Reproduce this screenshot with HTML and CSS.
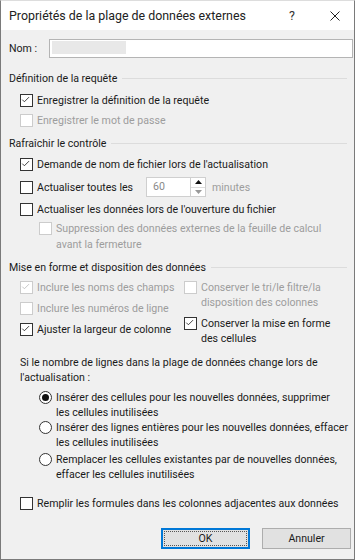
FILE: index.html
```html
<!DOCTYPE html>
<html lang="fr">
<head>
    <meta charset="UTF-8">
    <meta name="viewport" content="width=device-width, initial-scale=1.0">
    <title>Propriétés de la plage de données externes</title>
    <link rel="stylesheet" href="styles.css">
</head>
<body>
    <div class="dialog">
        <div class="titlebar">
            <span class="title">Propriétés de la plage de données externes</span>
            <span class="help">?</span>
            <svg class="close" width="10" height="10" viewBox="0 0 10 10">
                <path d="M0.5 0.5 L9.5 9.5 M9.5 0.5 L0.5 9.5" stroke="#222" stroke-width="1" fill="none"/>
            </svg>
        </div>

        <div class="content">
            <div class="name-row">
                <span class="name-label">Nom :</span>
                <div class="name-input"><span class="redacted"></span></div>
            </div>

            <!-- Définition de la requête -->
            <div class="group-title g1"><span>Définition de la requête</span><i></i></div>
            <div class="check r-q1">
                <span class="box"><svg viewBox="0 0 13 13"><path d="M2.5 6.5 L5 9 L10.5 3.5" /></svg></span>
                <span>Enregistrer la définition de la requête</span>
            </div>
            <div class="check disabled r-q2">
                <span class="box"></span>
                <span>Enregistrer le mot de passe</span>
            </div>

            <!-- Rafraîchir le contrôle -->
            <div class="group-title g2"><span>Rafraîchir le contrôle</span><i></i></div>
            <div class="check r-c1">
                <span class="box"><svg viewBox="0 0 13 13"><path d="M2.5 6.5 L5 9 L10.5 3.5" /></svg></span>
                <span>Demande de nom de fichier lors de l'actualisation</span>
            </div>
            <div class="check r-c2">
                <span class="box"></span>
                <span class="every">Actualiser toutes les</span>
                <div class="spinner">
                    <span class="spin-value">60</span>
                    <div class="spin-btns">
                        <span class="spin-up"><svg width="7" height="4" viewBox="0 0 7 4"><path d="M0 4 L3.5 0 L7 4 Z" fill="#111"/></svg></span>
                        <span class="spin-down"><svg width="7" height="4" viewBox="0 0 7 4"><path d="M0 0 L3.5 4 L7 0 Z" fill="#999"/></svg></span>
                    </div>
                </div>
                <span class="muted">minutes</span>
            </div>
            <div class="check r-c3">
                <span class="box"></span>
                <span>Actualiser les données lors de l'ouverture du fichier</span>
            </div>
            <div class="check sub disabled tall r-c4">
                <span class="box"></span>
                <span>Suppression des données externes de la feuille de calcul<br>avant la fermeture</span>
            </div>

            <!-- Mise en forme -->
            <div class="group-title g3"><span>Mise en forme et disposition des données</span><i></i></div>
            <div class="format-grid">
                <div class="col">
                    <div class="check disabled">
                        <span class="box"><svg viewBox="0 0 13 13"><path d="M2.5 6.5 L5 9 L10.5 3.5" /></svg></span>
                        <span>Inclure les noms des champs</span>
                    </div>
                    <div class="check disabled">
                        <span class="box"></span>
                        <span>Inclure les numéros de ligne</span>
                    </div>
                    <div class="check">
                        <span class="box"><svg viewBox="0 0 13 13"><path d="M2.5 6.5 L5 9 L10.5 3.5" /></svg></span>
                        <span>Ajuster la largeur de colonne</span>
                    </div>
                </div>
                <div class="col right">
                    <div class="check disabled">
                        <span class="box"></span>
                        <span>Conserver le tri/le filtre/la<br>disposition des colonnes</span>
                    </div>
                    <div class="check">
                        <span class="box"><svg viewBox="0 0 13 13"><path d="M2.5 6.5 L5 9 L10.5 3.5" /></svg></span>
                        <span>Conserver la mise en forme<br>des cellules</span>
                    </div>
                </div>
            </div>

            <p class="rows-note">Si le nombre de lignes dans la plage de données change lors de<br>l'actualisation :</p>
            <div class="radio r-r1">
                <span class="dot selected"></span>
                <span>Insérer des cellules pour les nouvelles données, supprimer<br>les cellules inutilisées</span>
            </div>
            <div class="radio r-r2">
                <span class="dot"></span>
                <span>Insérer des lignes entières pour les nouvelles données, effacer<br>les cellules inutilisées</span>
            </div>
            <div class="radio r-r3">
                <span class="dot"></span>
                <span>Remplacer les cellules existantes par de nouvelles données,<br>effacer les cellules inutilisées</span>
            </div>

            <div class="check r-fill">
                <span class="box"></span>
                <span>Remplir les formules dans les colonnes adjacentes aux données</span>
            </div>

            <div class="buttons">
                <button class="btn default"><span>OK</span></button>
                <button class="btn">Annuler</button>
            </div>
        </div>
    </div>
</body>
</html>
```

FILE: styles.css
```css
* {
    box-sizing: border-box;
}
body {
    margin: 0;
    font-family: Roboto, "Liberation Sans", sans-serif;
    font-size: 10.6px;
    color: #1a1a1a;
}
.dialog {
    width: 355px;
    height: 560px;
    border: 1px solid #7a7a7a;
    border-top-color: #ddd;
    background: #f0f0f0;
    overflow: hidden;
    white-space: nowrap;
}

/* Title bar */
.titlebar {
    height: 29px;
    background: #fff;
    display: flex;
    align-items: center;
    padding-left: 8px;
}
.title {
    font-size: 12.4px;
    color: #222;
    flex: 1;
}
.help {
    font-size: 12.5px;
    color: #333;
    width: 41px;
}
.close {
    margin-right: 14px;
}

.content {
    padding: 9px 0 0 8px;
}

/* Nom */
.name-row {
    display: flex;
    align-items: center;
    height: 19px;
}
.name-label {
    width: 40px;
}
.name-input {
    flex: 1;
    height: 19px;
    margin-right: 1px;
    background: #fff;
    border: 1px solid #b4b4b4;
    padding: 1px 2px;
}
.redacted {
    display: block;
    width: 74px;
    height: 13px;
    background: #e8e8e8;
}

/* Group headers */
.group-title {
    display: flex;
    align-items: center;
    line-height: 15px;
    height: 15px;
    padding-right: 7px;
}
.group-title i {
    flex: 1;
    height: 1px;
    background: #dcdcdc;
    margin-left: 5px;
}
.g1 { margin-top: 13px; }
.g2 { margin-top: 8px; }
.g3 { margin-top: 7px; }

/* Checkboxes */
.check {
    display: flex;
    align-items: center;
    line-height: 15px;
    padding-left: 11px;
}
.check.tall,
.format-grid .check {
    align-items: flex-start;
}
.check.tall .box,
.format-grid .box {
    margin-top: 1px;
}
.box {
    width: 13px;
    height: 13px;
    flex: none;
    border: 1px solid #333;
    background: #fff;
    margin-right: 4px;
    display: flex;
}
.box svg {
    width: 11px;
    height: 11px;
    margin: 0;
}
.box path {
    fill: none;
    stroke: #222;
    stroke-width: 1;
    transform: translate(-1px, -1px);
}
.disabled {
    color: #9d9d9d;
}
.disabled .box {
    border-color: #cccccc;
}
.disabled .box path {
    stroke: #bdbdbd;
}
.check.sub {
    padding-left: 30px;
    line-height: 16px;
}

.r-q1 { margin-top: 7px; }
.r-q2 { margin-top: 5px; }
.r-c1 { margin-top: 6px; }
.r-c2 { margin-top: 5px; height: 20px; }
.r-c3 { margin-top: 5px; }
.r-c4 { margin-top: 4px; }

/* Spinner */
.every {
    width: 109px;
}
.spinner {
    display: flex;
    width: 60px;
    height: 20px;
    border: 1px solid #cfcfcf;
    background: #fff;
    margin-right: 6px;
}
.spin-value {
    flex: 1;
    color: #8a8a8a;
    padding-left: 6px;
    line-height: 18px;
}
.spin-btns {
    width: 15px;
    display: flex;
    flex-direction: column;
    border-left: 1px solid #cfcfcf;
}
.spin-btns span {
    flex: 1;
    display: flex;
    align-items: center;
    justify-content: center;
}
.spin-up {
    border-bottom: 1px solid #dcdcdc;
}
.muted {
    color: #9d9d9d;
}

/* Format grid */
.format-grid {
    display: flex;
    margin-top: 5px;
}
.format-grid .col {
    display: flex;
    flex-direction: column;
    gap: 6px;
    width: 164px;
}
.format-grid .col.right {
    width: auto;
    padding-left: 0;
}
.format-grid .col.right .check {
    padding-left: 11px;
}

.rows-note {
    margin: 9px 0 0 11px;
    line-height: 15px;
}

/* Radios */
.radio {
    display: flex;
    align-items: flex-start;
    line-height: 15px;
    padding-left: 30px;
}
.dot {
    width: 13px;
    height: 13px;
    flex: none;
    border: 1px solid #333;
    border-radius: 50%;
    background: #fff;
    margin: 1px 4px 0 0;
    display: flex;
    align-items: center;
    justify-content: center;
}
.dot.selected::after {
    content: "";
    width: 7px;
    height: 7px;
    border-radius: 50%;
    background: #111;
}
.r-r1 { margin-top: 5px; }
.r-r2 { margin-top: 0; }
.r-r3 { margin-top: 2px; }
.r-fill { margin-top: 14px; }

/* Buttons */
.buttons {
    display: flex;
    justify-content: flex-end;
    gap: 12px;
    margin-top: 17px;
    padding-right: 3px;
}
.btn {
    width: 89px;
    height: 21px;
    font-family: inherit;
    font-size: 10.6px;
    color: #1a1a1a;
    background: #e1e1e1;
    border: 1px solid #adadad;
    padding: 0;
}
.btn.default {
    border: 2px solid #0078d7;
    padding: 1px;
}
.btn.default span {
    display: flex;
    align-items: center;
    justify-content: center;
    height: 100%;
    border: 1px dotted #555;
}
```
